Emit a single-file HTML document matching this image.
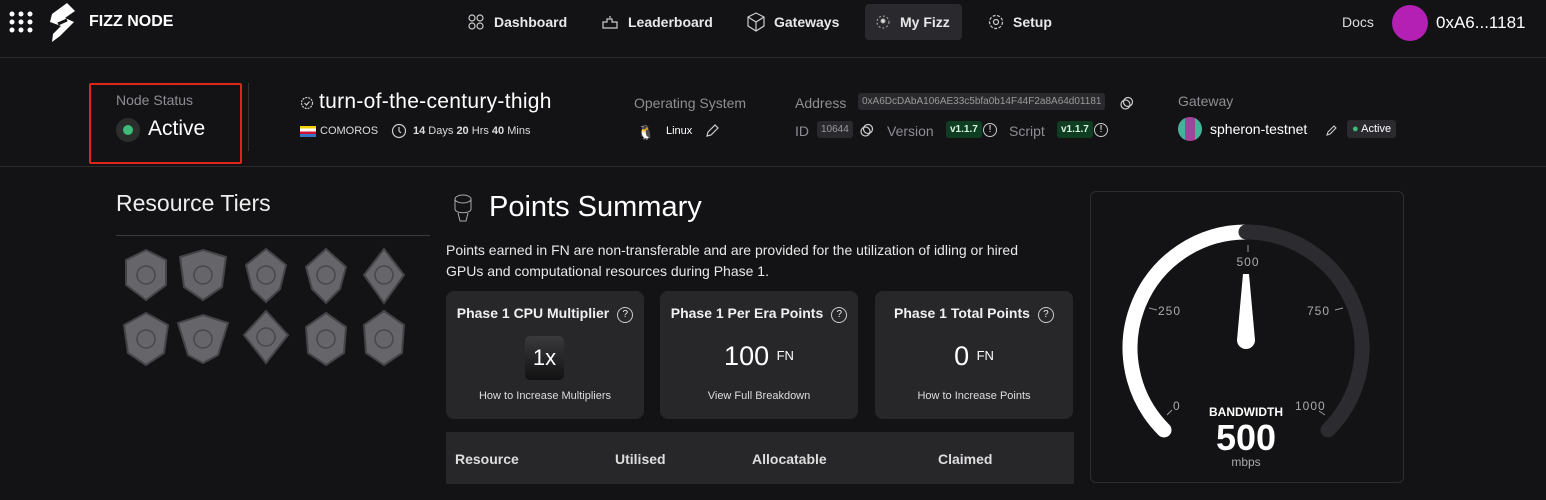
<!DOCTYPE html>
<html><head><meta charset="utf-8"><style>
*{margin:0;padding:0;box-sizing:border-box}
body{width:1546px;height:500px;background:#131315;color:#fff;font-family:"Liberation Sans",sans-serif;position:relative;overflow:hidden}
.a{position:absolute;white-space:nowrap}
.nav{font-size:14px;font-weight:bold;color:#e8e8ea}
.muted{color:#8d8d93}
.card{position:absolute;background:#27272a;border-radius:8px;width:198px;height:128px;top:291px;text-align:center}
.card .t{position:absolute;top:14px;left:0;right:0;font-size:14px;font-weight:bold;color:#f0f0f0}
.card .b{position:absolute;top:99px;left:0;right:0;font-size:11px;color:#ddd}
.q{display:inline-block;width:16px;height:16px;border:1.3px solid #ccc;border-radius:50%;font-size:10px;line-height:13px;text-align:center;vertical-align:1px;margin-left:8px;font-weight:normal}
.a.q{margin-left:0}
.tag{background:#2a2a2e;border-radius:3px;color:#999;font-size:10px;padding:3px 4px}
.ver{background:#0f3d22;color:#d8f5e2;border-radius:3px;font-size:10px;padding:3px 4px;font-weight:bold}
</style></head><body>
<!-- header -->
<div class="a" style="left:8px;top:10px;width:26px;height:24px">
<svg width="26" height="24"><g fill="#fff"><circle cx="4" cy="4" r="2.5"/><circle cx="13" cy="4" r="2.5"/><circle cx="22" cy="4" r="2.5"/><circle cx="4" cy="12" r="2.5"/><circle cx="13" cy="12" r="2.5"/><circle cx="22" cy="12" r="2.5"/><circle cx="4" cy="20" r="2.5"/><circle cx="13" cy="20" r="2.5"/><circle cx="22" cy="20" r="2.5"/></g></svg></div>
<svg class="a" style="left:45px;top:2px" width="36" height="42"><path d="M22 1 L30 9 L20 16 L29 20 L15 34 L7 40 L8 32 L16 24 L5 20 L7 12 Z" fill="#fff"/><path d="M13 22 L22 18" stroke="#131315" stroke-width="3"/></svg>
<div class="a" style="left:89px;top:13px;font-size:16px;font-weight:bold">FIZZ NODE</div>
<div class="a" style="left:865px;top:4px;width:97px;height:36px;background:#2a2a2e;border-radius:4px"></div>
<svg class="a" style="left:468px;top:14px" width="16" height="16" fill="none" stroke="#ccc" stroke-width="1.2"><circle cx="4" cy="4" r="3"/><circle cx="12" cy="4" r="3"/><circle cx="4" cy="12" r="3"/><circle cx="12" cy="12" r="3"/></svg>
<div class="a nav" style="left:494px;top:14px">Dashboard</div>
<svg class="a" style="left:602px;top:14px" width="16" height="16" fill="none" stroke="#ccc" stroke-width="1.2"><path d="M1 14V8h4V5h5v3h5v6z M7 3h2"/></svg>
<div class="a nav" style="left:628px;top:14px">Leaderboard</div>
<svg class="a" style="left:747px;top:12px" width="18" height="20" fill="none" stroke="#ccc" stroke-width="1.2"><path d="M9 1l8 4v9l-8 5-8-5V5z M1 5l8 5 8-5 M9 10v9"/></svg>
<div class="a nav" style="left:774px;top:14px">Gateways</div>
<svg class="a" style="left:875px;top:14px" width="16" height="16" fill="none" stroke="#aaa" stroke-width="1"><circle cx="8" cy="8" r="6" stroke-dasharray="2 2"/><circle cx="8" cy="7" r="2" fill="#ddd"/></svg>
<div class="a nav" style="left:900px;top:14px">My Fizz</div>
<svg class="a" style="left:988px;top:14px" width="16" height="16" fill="none" stroke="#ccc" stroke-width="1.2"><circle cx="8" cy="8" r="2.5"/><circle cx="8" cy="8" r="6.5" stroke-dasharray="3 1.5"/></svg>
<div class="a nav" style="left:1013px;top:14px">Setup</div>
<div class="a" style="left:1342px;top:14px;font-size:14px;color:#ddd">Docs</div>
<div class="a" style="left:1392px;top:5px;width:36px;height:36px;border-radius:50%;background:#b41fb4"></div>
<div class="a" style="left:1436px;top:13px;font-size:17px">0xA6...1181</div>
<div class="a" style="left:0;top:57px;width:1546px;height:1px;background:#2c2c30"></div>
<!-- status row -->
<div class="a" style="left:89px;top:83px;width:153px;height:81px;border:2px solid #e0251f;border-radius:2px"></div>
<div class="a muted" style="left:116px;top:92px;font-size:14px">Node Status</div>
<div class="a" style="left:116px;top:118px;width:24px;height:24px;border-radius:50%;background:#2a2f2c"></div>
<div class="a" style="left:123px;top:125px;width:10px;height:10px;border-radius:50%;background:#3dbb7a"></div>
<div class="a" style="left:148px;top:117px;font-size:21px">Active</div>
<div class="a" style="left:248px;top:83px;width:1px;height:68px;background:#333"></div>
<svg class="a" style="left:300px;top:96px" width="14" height="14" fill="none" stroke="#ccc" stroke-width="1.2"><circle cx="7" cy="7" r="5.5" stroke-dasharray="2 1"/><path d="M4.5 7l2 2 3-3.5"/></svg>
<div class="a" style="left:319px;top:90px;font-size:21px;letter-spacing:0.3px">turn-of-the-century-thigh</div>
<div class="a" style="left:300px;top:126px;width:16px;height:11px;background:linear-gradient(#f5d000 25%,#fff 25% 50%,#d21034 50% 75%,#3a75c4 75%)"></div>
<div class="a" style="left:320px;top:125px;font-size:11px;color:#ddd">COMOROS</div>
<svg class="a" style="left:391px;top:123px" width="16" height="16" fill="none" stroke="#ccc" stroke-width="1.2"><circle cx="8" cy="8" r="6.5"/><path d="M8 4v4l2 2"/></svg>
<div class="a" style="left:413px;top:125px;font-size:11px;color:#ddd"><b>14</b> Days <b>20</b> Hrs <b>40</b> Mins</div>
<div class="a muted" style="left:634px;top:95px;font-size:14px">Operating System</div>
<div class="a" style="left:637px;top:124px;font-size:14px">🐧</div>
<div class="a" style="left:666px;top:125px;font-size:11px">Linux</div>
<svg class="a" style="left:704px;top:123px" width="16" height="16" fill="none" stroke="#ccc" stroke-width="1.2"><path d="M3 13l1-4 7-7 3 3-7 7z"/></svg>
<div class="a muted" style="left:795px;top:95px;font-size:14px">Address</div>
<div class="a tag" style="left:858px;top:93px">0xA6DcDAbA106AE33c5bfa0b14F44F2a8A64d01181</div>
<svg class="a" style="left:1120px;top:96px" width="14" height="14" fill="none" stroke="#ccc" stroke-width="1.2"><circle cx="8" cy="6" r="4.5"/><circle cx="5.5" cy="8.5" r="4.5"/></svg>
<div class="a muted" style="left:795px;top:123px;font-size:14px">ID</div>
<div class="a tag" style="left:817px;top:121px">10644</div>
<svg class="a" style="left:860px;top:123px" width="14" height="14" fill="none" stroke="#ccc" stroke-width="1.2"><circle cx="8" cy="6" r="4.5"/><circle cx="5.5" cy="8.5" r="4.5"/></svg>
<div class="a muted" style="left:887px;top:123px;font-size:14px">Version</div>
<div class="a ver" style="left:946px;top:121px">v1.1.7</div>
<div class="a q" style="left:983px;top:123px;width:14px;height:14px;line-height:11px">!</div>
<div class="a muted" style="left:1009px;top:123px;font-size:14px">Script</div>
<div class="a ver" style="left:1057px;top:121px">v1.1.7</div>
<div class="a q" style="left:1094px;top:123px;width:14px;height:14px;line-height:11px">!</div>
<div class="a muted" style="left:1178px;top:93px;font-size:14px">Gateway</div>
<div class="a" style="left:1178px;top:117px;width:24px;height:24px;border-radius:50%;background:linear-gradient(90deg,#45b39a 30%,#a0459b 30% 70%,#45b39a 70%)"></div>
<div class="a" style="left:1210px;top:121px;font-size:14px">spheron-testnet</div>
<svg class="a" style="left:1325px;top:123px" width="14" height="14" fill="none" stroke="#ccc" stroke-width="1.1"><path d="M2 12l1-3 6-6 2 2-6 6z"/></svg>
<div class="a" style="left:1347px;top:120px;background:#2a2a2e;border-radius:3px;padding:3px 5px;font-size:11px"><span style="color:#3dbb7a">●</span> Active</div>
<div class="a" style="left:0;top:166px;width:1546px;height:1px;background:#2c2c30"></div>
<!-- resource tiers -->
<div class="a" style="left:116px;top:190px;font-size:23px;color:#eee">Resource Tiers</div>
<div class="a" style="left:116px;top:235px;width:314px;height:1px;background:#3a3a3e"></div>
<svg class="a" style="left:118px;top:245px" width="300" height="125">
<g fill="#66666a" stroke="#444448" stroke-width="2">
<path d="M28 5 L48 15 L48 40 L28 55 L8 40 L8 15Z"/><path d="M85 5 L108 12 L104 42 L85 55 L66 42 L62 12Z"/><path d="M148 4 L168 20 L162 44 L148 57 L134 44 L128 20Z"/><path d="M208 4 L228 22 L222 44 L208 58 L194 44 L188 22Z"/><path d="M266 4 L286 30 L266 58 L246 30Z"/>
<path d="M28 68 L50 80 L46 108 L28 120 L10 108 L6 80Z"/><path d="M85 70 L110 78 L100 110 L85 118 L70 110 L60 78Z"/><path d="M148 66 L170 90 L148 118 L126 90Z"/><path d="M208 68 L228 82 L226 108 L208 120 L190 108 L188 82Z"/><path d="M266 66 L286 80 L284 108 L266 120 L248 108 L246 80Z"/>
</g><g fill="none" stroke="#48484c" stroke-width="1.5"><circle cx="28" cy="30" r="9"/><circle cx="85" cy="30" r="9"/><circle cx="148" cy="30" r="9"/><circle cx="208" cy="30" r="9"/><circle cx="266" cy="30" r="9"/><circle cx="28" cy="94" r="9"/><circle cx="85" cy="94" r="9"/><circle cx="148" cy="92" r="9"/><circle cx="208" cy="94" r="9"/><circle cx="266" cy="94" r="9"/></g></svg>
<!-- points summary -->
<svg class="a" style="left:450px;top:193px" width="26" height="32" fill="none" stroke="#aaa" stroke-width="1"><ellipse cx="13" cy="6" rx="8" ry="4"/><path d="M5 6v10c0 5 16 5 16 0V6 M8 20l2 8h6l2-8"/></svg>
<div class="a" style="left:489px;top:191px;font-size:29px">Points Summary</div>
<div class="a" style="left:446px;top:240px;font-size:14px;line-height:21px;color:#e8e8e8;white-space:normal;width:600px">Points earned in FN are non-transferable and are provided for the utilization of idling or hired GPUs and computational resources during Phase 1.</div>
<div class="card" style="left:446px"><div class="t">Phase 1 CPU Multiplier<span class="q">?</span></div>
<div class="a" style="left:79px;top:45px;width:39px;height:44px;border-radius:5px;background:linear-gradient(#3a3a3e,#111);font-size:22px;line-height:44px;text-align:center">1x</div>
<div class="b">How to Increase Multipliers</div></div>
<div class="card" style="left:660px"><div class="t">Phase 1 Per Era Points<span class="q">?</span></div>
<div class="a" style="left:0;right:0;top:50px;font-size:27px">100 <span style="font-size:13px;vertical-align:5px">FN</span></div>
<div class="b">View Full Breakdown</div></div>
<div class="card" style="left:875px"><div class="t">Phase 1 Total Points<span class="q">?</span></div>
<div class="a" style="left:0;right:0;top:50px;font-size:27px">0 <span style="font-size:13px;vertical-align:5px">FN</span></div>
<div class="b">How to Increase Points</div></div>
<div class="a" style="left:446px;top:432px;width:628px;height:52px;background:#27272a"></div>
<div class="a" style="left:455px;top:451px;font-size:14px;font-weight:bold;color:#ddd">Resource</div>
<div class="a" style="left:615px;top:451px;font-size:14px;font-weight:bold;color:#ddd">Utilised</div>
<div class="a" style="left:752px;top:451px;font-size:14px;font-weight:bold;color:#ddd">Allocatable</div>
<div class="a" style="left:938px;top:451px;font-size:14px;font-weight:bold;color:#ddd">Claimed</div>
<!-- gauge -->
<div class="a" style="left:1090px;top:191px;width:314px;height:292px;border:1px solid #2e2e32;border-radius:6px"></div>
<svg class="a" style="left:0;top:0" width="1546" height="500" font-family="Liberation Sans,sans-serif">
<path d="M1164 430 A116 116 0 0 1 1246 232" stroke="#fff" stroke-width="15" fill="none" stroke-linecap="round"/>
<path d="M1246 232 A116 116 0 0 1 1328 430" stroke="#2c2c30" stroke-width="15" fill="none" stroke-linecap="round"/>
<g stroke="#999" stroke-width="1"><path d="M1248 245v7 M1149 308l8 2 M1343 308l-8 2 M1167 415l5-5 M1325 415l-6-4"/></g>
<g fill="#aaa" font-size="12" letter-spacing="1"><text x="1248" y="266" text-anchor="middle">500</text><text x="1158" y="315">250</text><text x="1307" y="315">750</text><text x="1173" y="410">0</text><text x="1295" y="410">1000</text></g>
<path d="M1243 274 L1249 274 L1255 340 A9 9 0 1 1 1237 340Z" fill="#fff"/>
<text x="1246" y="416" text-anchor="middle" font-size="12" font-weight="bold" fill="#fff">BANDWIDTH</text>
<text x="1246" y="450" text-anchor="middle" font-size="36" font-weight="bold" fill="#fff">500</text>
<text x="1246" y="466" text-anchor="middle" font-size="12" fill="#aaa">mbps</text>
</svg>
</body></html>
